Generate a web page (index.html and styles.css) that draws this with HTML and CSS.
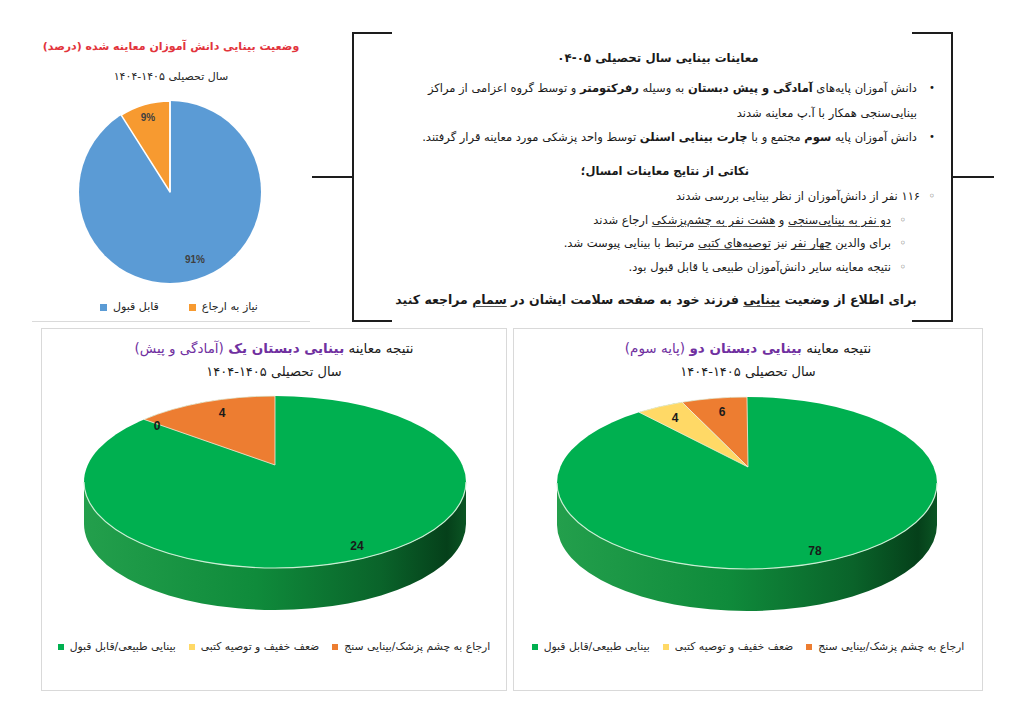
FILE: index.html
```html
<!DOCTYPE html>
<html lang="fa">
<head>
<meta charset="utf-8">
<title>وضعیت بینایی دانش آموزان</title>
<link rel="stylesheet" href="styles.css">
</head>
<body>
<div class="page">
  <div class="top-row">
    <section class="summary" dir="rtl">
      <div class="summary-title">وضعیت بینایی دانش آموزان معاینه شده (درصد)</div>
      <div class="summary-sub">سال تحصیلی ۱۴۰۵-۱۴۰۴</div>
      <svg class="summary-pie" width="278" height="205" viewBox="0 55 278 205">
        <circle cx="138" cy="160" r="91" fill="#5b9bd5"/>
        <path d="M138 160 L138 69 A91 91 0 0 0 89.2 83.2 Z" fill="#f79a30" stroke="#ffffff" stroke-width="1.5" stroke-linejoin="round"/>
        <path d="M138 160 L138 69" stroke="#ffffff" stroke-width="1.5"/>
        <text x="116" y="89" class="pct">9%</text>
        <text x="163" y="231" class="pct">91%</text>
      </svg>
      <div class="legend legend-top" dir="ltr">
        <span class="item"><i class="sw sw-blue"></i><span dir="rtl">قابل قبول</span></span>
        <span class="item"><i class="sw sw-orange-l"></i><span dir="rtl">نیاز به ارجاع</span></span>
      </div>
    </section>

    <section class="notice" dir="rtl">
      <svg class="frame" width="682" height="290" viewBox="0 0 682 290">
        <path d="M40 1 H80 M41 0 V290 M40 289 H80 M0 145 H41" stroke="#1d1d1d" stroke-width="2" fill="none"/>
        <path d="M600 1 H641 M640 0 V290 M600 289 H641 M640 145 H682" stroke="#1d1d1d" stroke-width="2" fill="none"/>
      </svg>
      <h1 class="notice-title">معاینات بینایی سال تحصیلی ۰۵-۰۴</h1>
      <ul class="points">
        <li><span class="dot">•</span><span class="txt"><span class="line">دانش آموزان پایه&zwnj;های <b>آمادگی و پیش دبستان</b> به وسیله <b>رفرکتومتر</b>  و توسط گروه اعزامی از مراکز</span><span class="line">بینایی&zwnj;سنجی همکار با آ.پ معاینه شدند</span></span></li>
        <li><span class="dot">•</span><span class="txt"><span class="line">دانش آموزان پایه <b>سوم</b> مجتمع و با <b>چارت بینایی اسنلن</b> توسط واحد پزشکی مورد معاینه قرار گرفتند.</span></span></li>
      </ul>
      <h2 class="notice-sub">نکاتی از نتایج معاینات امسال؛</h2>
      <ul class="findings">
        <li><span class="ring">◦</span><span class="txt">۱۱۶ نفر از دانش&zwnj;آموزان از نظر بینایی بررسی شدند</span></li>
        <li class="sub"><span class="ring">◦</span><span class="txt"><u>دو نفر به بینایی&zwnj;سنجی</u> و <u>هشت نفر به چشم&zwnj;پزشکی</u> ارجاع شدند</span></li>
        <li class="sub"><span class="ring">◦</span><span class="txt">برای والدین <u>چهار نفر</u> نیز <u>توصیه&zwnj;های کتبی</u> مرتبط با بینایی پیوست شد.</span></li>
        <li class="sub"><span class="ring">◦</span><span class="txt">نتیجه معاینه سایر دانش&zwnj;آموزان طبیعی یا قابل قبول بود.</span></li>
      </ul>
      <p class="cta">برای اطلاع از وضعیت <u>بینایی</u> فرزند خود به صفحه سلامت ایشان  در <u>سمام</u> مراجعه کنید</p>
    </section>
  </div>

  <div class="bottom-row">
    <section class="card card-left" dir="rtl">
      <div class="card-title">نتیجه معاینه <b class="purple">بینایی دبستان یک</b> <span class="purple">(آمادگی و پیش)</span></div>
      <div class="card-sub">سال تحصیلی ۱۴۰۵-۱۴۰۴</div>
      <svg class="pie3d" width="466" height="236" viewBox="0 54 466 236">
        <defs>
          <linearGradient id="sideL" x1="0" y1="0" x2="1" y2="0">
            <stop offset="0" stop-color="#239f4c"/>
            <stop offset="0.45" stop-color="#0f8b3b"/>
            <stop offset="0.78" stop-color="#0a632a"/>
            <stop offset="0.95" stop-color="#05401a"/>
            <stop offset="1" stop-color="#0b5524"/>
          </linearGradient>
        </defs>
        <path d="M44 154 V196 A191 86 0 0 0 426 196 V154 A191 86 0 0 1 44 154 Z" fill="url(#sideL)"/>
        <ellipse cx="235" cy="154" rx="191" ry="86" fill="#00b050"/>
        <path d="M44 154 A191 86 0 0 0 426 154" fill="none" stroke="#c9eed3" stroke-width="1.2"/>
        <path d="M235 137 L235 68 A191 86 0 0 0 104 91.4 Z" fill="#ed7d31" stroke="#f4efe0" stroke-width="0.8"/>
        <text x="117" y="102" class="num">0</text>
        <text x="182" y="89" class="num">4</text>
        <text x="317" y="222" class="num">24</text>
      </svg>
      <div class="legend legend-bottom" dir="ltr">
        <span class="item"><i class="sw sw-green"></i><span dir="rtl">بینایی طبیعی/قابل قبول</span></span>
        <span class="item"><i class="sw sw-yellow"></i><span dir="rtl">ضعف خفیف و توصیه کتبی</span></span>
        <span class="item"><i class="sw sw-orange"></i><span dir="rtl">ارجاع به چشم پزشک/بینایی سنج</span></span>
      </div>
    </section>

    <section class="card card-right" dir="rtl">
      <div class="card-title">نتیجه معاینه <b class="purple">بینایی دبستان دو</b> <span class="purple">(پایه سوم)</span></div>
      <div class="card-sub">سال تحصیلی ۱۴۰۵-۱۴۰۴</div>
      <svg class="pie3d" width="470" height="236" viewBox="0 54 470 236">
        <defs>
          <linearGradient id="sideR" x1="0" y1="0" x2="1" y2="0">
            <stop offset="0" stop-color="#239f4c"/>
            <stop offset="0.45" stop-color="#0f8b3b"/>
            <stop offset="0.78" stop-color="#0a632a"/>
            <stop offset="0.95" stop-color="#05401a"/>
            <stop offset="1" stop-color="#0b5524"/>
          </linearGradient>
        </defs>
        <path d="M45 155 V197 A190 86 0 0 0 425 197 V155 A190 86 0 0 1 45 155 Z" fill="url(#sideR)"/>
        <ellipse cx="235" cy="155" rx="190" ry="86" fill="#00b050"/>
        <path d="M45 155 A190 86 0 0 0 425 155" fill="none" stroke="#c9eed3" stroke-width="1.2"/>
        <path d="M236 139 L235 69 A190 86 0 0 0 170 74.2 Z" fill="#ed7d31" stroke="#f4efe0" stroke-width="0.8"/>
        <path d="M236 139 L170 74.2 A190 86 0 0 0 127 84.2 Z" fill="#ffd966" stroke="#f4efe0" stroke-width="0.8"/>
        <text x="210" y="88" class="num">6</text>
        <text x="163" y="94" class="num">4</text>
        <text x="303" y="227" class="num">78</text>
      </svg>
      <div class="legend legend-bottom" dir="ltr">
        <span class="item"><i class="sw sw-green"></i><span dir="rtl">بینایی طبیعی/قابل قبول</span></span>
        <span class="item"><i class="sw sw-yellow"></i><span dir="rtl">ضعف خفیف و توصیه کتبی</span></span>
        <span class="item"><i class="sw sw-orange"></i><span dir="rtl">ارجاع به چشم پزشک/بینایی سنج</span></span>
      </div>
    </section>
  </div>
</div>
</body>
</html>
```

FILE: styles.css
```css
* { box-sizing: border-box; }

html, body {
  margin: 0;
  padding: 0;
  background: #ffffff;
}

body {
  width: 1024px;
  height: 724px;
  overflow: hidden;
  font-family: "DejaVu Sans", "Noto Sans", sans-serif;
  color: #1a1a1a;
}

.page {
  width: 1024px;
  height: 724px;
}

/* ---------- top row ---------- */
.top-row {
  display: flex;
  align-items: flex-start;
  padding: 32px 0 0 32px;
}

.summary {
  width: 278px;
  height: 290px;
  border-bottom: 1px solid #dadada;
  display: flex;
  flex-direction: column;
  align-items: center;
  padding-top: 5px;
}

.summary-title {
  font-size: 11px;
  font-weight: bold;
  color: #e2343c;
  line-height: 20px;
  white-space: nowrap;
}

.summary-sub {
  font-size: 11px;
  line-height: 20px;
  margin-top: 10px;
  color: #262626;
  white-space: nowrap;
}

.summary-pie {
  display: block;
}

.pct {
  font-family: "Liberation Sans", Arial, sans-serif;
  font-weight: bold;
  font-size: 10px;
  fill: #404040;
  text-anchor: middle;
}

.num {
  font-family: "Liberation Sans", Arial, sans-serif;
  font-weight: bold;
  font-size: 12px;
  fill: #1a1a1a;
  text-anchor: middle;
}

.legend {
  display: flex;
  justify-content: center;
  align-items: center;
  white-space: nowrap;
}

.legend .item {
  display: flex;
  align-items: center;
}

.sw {
  display: inline-block;
  flex: none;
}

.legend-top {
  margin-top: 7px;
  line-height: 16px;
  font-size: 11px;
  gap: 30px;
  padding-left: 16px;
  color: #262626;
}

.legend-top .sw {
  width: 7px;
  height: 7px;
  margin-right: 6px;
}

.sw-blue { background: #5b9bd5; }
.sw-orange-l { background: #f79a30; }
.sw-green { background: #00b050; }
.sw-yellow { background: #ffd966; }
.sw-orange { background: #ed7d31; }

/* ---------- notice box ---------- */
.notice {
  position: relative;
  width: 600px;
  height: 290px;
  margin-left: 42px;
  padding-top: 14px;
  font-size: 11.5px;
  color: #1a1a1a;
}

.frame {
  position: absolute;
  left: -40px;
  top: 0;
}

.notice-title {
  margin: 0;
  font-size: 11.8px;
  font-weight: bold;
  line-height: 24px;
  text-align: center;
  padding-left: 12px;
}

.points,
.findings {
  list-style: none;
  margin: 0;
  padding: 0 15px 0 0;
}

.points {
  margin-top: 6px;
  line-height: 24.5px;
}

.points li,
.findings li {
  display: flex;
  align-items: flex-start;
}

.dot {
  width: 10px;
  flex: none;
  text-align: center;
  margin-left: 10px;
  font-size: 10px;
}

.txt {
  display: block;
  white-space: nowrap;
}

.txt .line {
  display: block;
}

.notice-sub {
  margin: 9.5px 0 0 0;
  font-size: 11.5px;
  font-weight: bold;
  line-height: 24px;
  text-align: center;
  padding-left: 26px;
}

.findings {
  margin-top: 2px;
  line-height: 23.7px;
}

.findings li.sub {
  padding-right: 29px;
}

.ring {
  width: 10px;
  flex: none;
  text-align: center;
  margin-left: 7px;
  color: #6e6e6e;
  font-size: 12px;
}

.findings u,
.cta u {
  text-decoration-color: #555;
  text-underline-offset: 2px;
}

.cta {
  margin: 8px 0 0 0;
  font-size: 12.5px;
  font-weight: bold;
  line-height: 24px;
  text-align: center;
  white-space: nowrap;
  padding-left: 8px;
}

/* ---------- bottom cards ---------- */
.bottom-row {
  display: flex;
  gap: 6px;
  margin-top: 6px;
  padding-left: 41px;
}

.card {
  height: 363px;
  border: 1px solid #d9d9d9;
  display: flex;
  flex-direction: column;
  align-items: center;
  padding-top: 9px;
}

.card-left { width: 466px; }
.card-right { width: 470px; }

.card-title {
  font-size: 13.5px;
  line-height: 20px;
  white-space: nowrap;
  color: #1a1a1a;
}

.purple {
  color: #7030a0;
}

.card-sub {
  font-size: 13px;
  line-height: 20px;
  margin-top: 4px;
  white-space: nowrap;
  color: #1a1a1a;
}

.pie3d {
  display: block;
  margin-left: auto;
  margin-right: auto;
}

.legend-bottom {
  margin-top: 21px;
  line-height: 16px;
  font-size: 10.8px;
  gap: 13px;
  color: #262626;
}

.legend-bottom .sw {
  width: 6px;
  height: 6px;
  margin-right: 6px;
}
```
